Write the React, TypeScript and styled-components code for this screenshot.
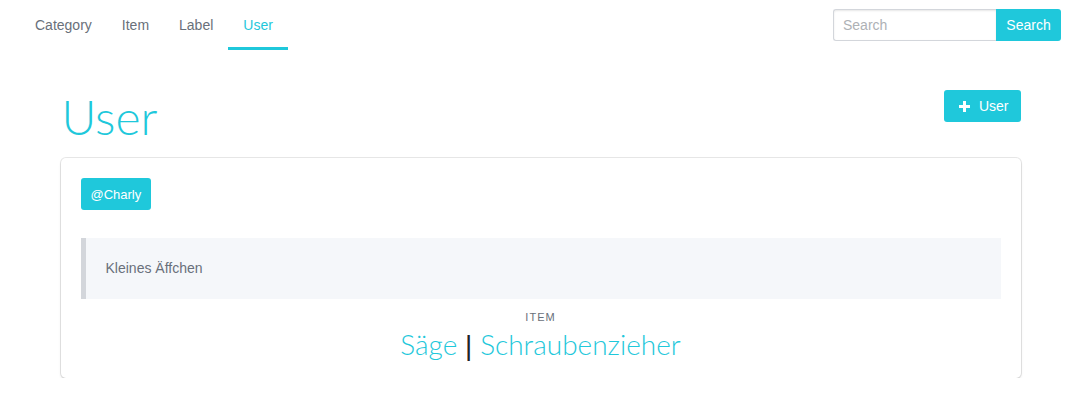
import styled, { createGlobalStyle } from 'styled-components';

const GlobalStyle = createGlobalStyle`
    html, body {
        margin: 0;
        padding: 0;
        background: #fff;
    }
    body {
        font-family: "Liberation Sans", Arial, sans-serif;
        font-size: 14px;
        color: #69707a;
    }
`

const tabs = ["Category", "Item", "Label", "User"];
const items = ["Säge", "Schraubenzieher"];

const PlusIcon = () => (
    <svg width="11" height="11" viewBox="0 0 11 11">
        <path d="M4 0h3v4h4v3H7v4H4V7H0V4h4z" fill="#fff" />
    </svg>
);

const App = () => {
    return (
        <>
            <GlobalStyle />
            <Nav>
                <Tabs>
                    {tabs.map(tab => (
                        <Tab key={tab} $active={tab === "User"}>{tab}</Tab>
                    ))}
                </Tabs>
                <SearchForm>
                    <SearchInput type="text" placeholder="Search" />
                    <SearchButton>Search</SearchButton>
                </SearchForm>
            </Nav>
            <Container>
                <Header>
                    <Title>User</Title>
                    <AddButton>
                        <IconBox><PlusIcon /></IconBox>
                        User
                    </AddButton>
                </Header>
                <Card>
                    <Tag>@Charly</Tag>
                    <Quote>Kleines Äffchen</Quote>
                    <Level>
                        <Heading>Item</Heading>
                        <ItemList>
                            {items.map((item, i) => (
                                <span key={item}>
                                    {i > 0 && <Separator> | </Separator>}
                                    <ItemLink>{item}</ItemLink>
                                </span>
                            ))}
                        </ItemList>
                    </Level>
                </Card>
            </Container>
        </>
    );
};

const Nav = styled.nav`
    display: flex;
    justify-content: space-between;
    align-items: center;
    height: 50px;
    padding: 0 20px;
`

const Tabs = styled.ul`
    display: flex;
    align-self: stretch;
    margin: 0;
    padding: 0;
    list-style: none;
`

const Tab = styled.li<{ $active?: boolean }>`
    display: flex;
    align-items: center;
    padding: 0 15px;
    padding-top: 3px;
    font-size: 14px;
    color: ${p => p.$active ? "#1fc8db" : "#69707a"};
    border-bottom: 3px solid ${p => p.$active ? "#1fc8db" : "transparent"};
    cursor: pointer;
`

const SearchForm = styled.div`
    display: flex;
    height: 32px;
`

const SearchInput = styled.input`
    box-sizing: border-box;
    width: 163px;
    height: 32px;
    margin: 0;
    padding: 0 9px;
    font-family: "Liberation Sans", Arial, sans-serif;
    font-size: 14px;
    color: #222324;
    border: 1px solid #d3d6db;
    border-right: none;
    border-radius: 3px 0 0 3px;
    box-shadow: inset 0 1px 2px rgba(17, 17, 17, 0.1);
    outline: none;

    &::placeholder {
        color: #aeb1b5;
    }
`

const SearchButton = styled.button`
    box-sizing: border-box;
    width: 65px;
    height: 32px;
    margin: 0;
    padding: 0;
    font-family: "Liberation Sans", Arial, sans-serif;
    font-size: 14px;
    color: #fff;
    background: #1fc8db;
    border: none;
    border-radius: 0 3px 3px 0;
`

const Container = styled.main`
    width: 960px;
    margin: 40px auto 0;
`

const Header = styled.div`
    display: flex;
    justify-content: space-between;
    align-items: flex-start;
    margin-bottom: 14px;
`

const Title = styled.h1`
    margin: 0 0 0 1px;
    font-family: Lato, "Liberation Sans", sans-serif;
    font-size: 48px;
    font-weight: 300;
    line-height: 54px;
    color: #1fc8db;
`

const AddButton = styled.button`
    display: flex;
    align-items: center;
    box-sizing: border-box;
    height: 32px;
    margin: 0;
    padding: 0 12px;
    font-family: "Liberation Sans", Arial, sans-serif;
    font-size: 14px;
    color: #fff;
    background: #1fc8db;
    border: none;
    border-radius: 3px;
`

const IconBox = styled.span`
    display: flex;
    justify-content: center;
    align-items: center;
    width: 18px;
    margin-right: 5px;
`

const Card = styled.section`
    padding: 20px 20px 18px;
    background: #fff;
    border-radius: 5px;
    box-shadow: 0 2px 3px rgba(17, 17, 17, 0.1), 0 0 0 1px rgba(17, 17, 17, 0.1);
`

const Tag = styled.button`
    display: block;
    box-sizing: border-box;
    height: 32px;
    margin: 0 0 28px;
    padding: 0 10px;
    font-family: "Liberation Sans", Arial, sans-serif;
    font-size: 13px;
    color: #fff;
    background: #1fc8db;
    border: none;
    border-radius: 3px;
`

const Quote = styled.blockquote`
    margin: 0;
    padding: 20px 20px;
    font-size: 14px;
    line-height: 21px;
    color: #69707a;
    background: #f5f7fa;
    border-left: 5px solid #d3d6db;
`

const Level = styled.div`
    display: flex;
    flex-direction: column;
    align-items: center;
    margin-top: 10px;
`

const Heading = styled.p`
    margin: 0 0 3px;
    font-size: 11px;
    line-height: 16px;
    letter-spacing: 1px;
    text-transform: uppercase;
    color: #69707a;
`

const ItemList = styled.p`
    margin: 0;
    font-family: Lato, "Liberation Sans", sans-serif;
    font-size: 28px;
    font-weight: 300;
    line-height: 32px;
`

const ItemLink = styled.a`
    color: #1fc8db;
    cursor: pointer;
`

const Separator = styled.span`
    font-family: "Liberation Sans", Arial, sans-serif;
    font-weight: 400;
    line-height: 20px;
    color: #222324;
    white-space: pre;
`

export default App;
